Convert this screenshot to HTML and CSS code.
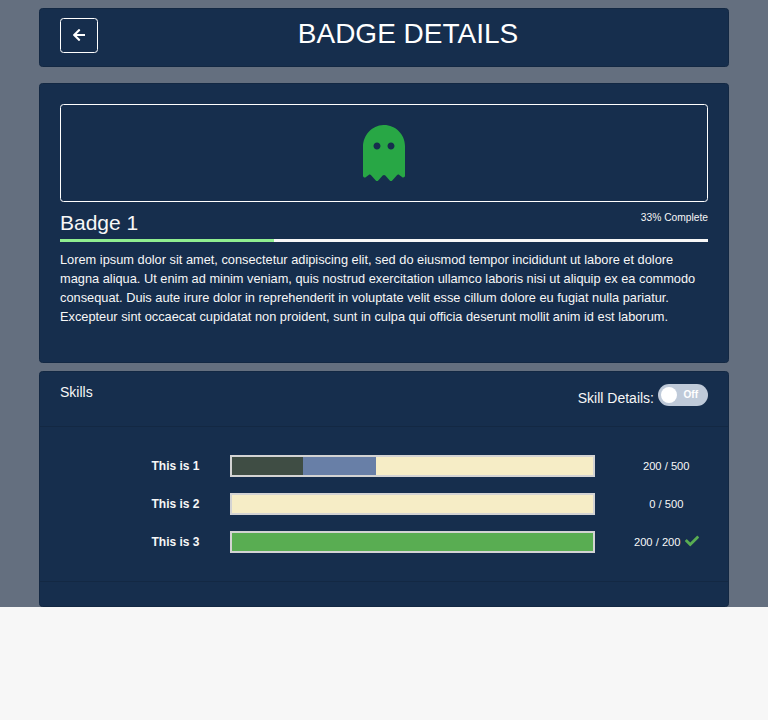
FILE: index.html
```html
<!DOCTYPE html>
<html lang="en">
<head>
<meta charset="utf-8">
<title>Badge Details</title>
<link rel="stylesheet" href="styles.css">
</head>
<body>
<main class="page">
  <header class="card title-card">
    <button class="back" type="button" aria-label="Back">
      <svg width="12.25" height="14" viewBox="0 0 448 512"><path fill="currentColor" d="M257.5 445.1l-22.2 22.2c-9.4 9.4-24.6 9.4-33.9 0L7 273c-9.4-9.4-9.4-24.6 0-33.9L201.4 44.7c9.4-9.4 24.6-9.4 33.9 0l22.2 22.2c9.5 9.5 9.3 25-.4 34.3L136.6 216H424c13.3 0 24 10.7 24 24v32c0 13.3-10.7 24-24 24H136.6l120.5 114.8c9.8 9.3 10 24.8.4 34.3z"/></svg>
    </button>
    <h1>BADGE DETAILS</h1>
  </header>

  <section class="card badge-card">
    <div class="badge-icon">
      <svg width="42" height="56" viewBox="0 0 384 512"><path fill="currentColor" d="M186.1.09C81.01 3.24 0 94.92 0 200.05v263.92c0 14.26 17.23 21.39 27.31 11.31l24.92-18.53c6.66-4.95 16-3.99 21.51 2.21l42.95 48.35c6.25 6.25 16.38 6.25 22.63 0l40.72-45.85c6.37-7.17 17.56-7.17 23.92 0l40.72 45.85c6.25 6.25 16.38 6.25 22.63 0l42.95-48.35c5.51-6.2 14.85-7.17 21.51-2.21l24.92 18.53c10.08 10.08 27.31 2.94 27.31-11.31V192C384 84 294.83-3.17 186.1.09zM128 224c-17.67 0-32-14.33-32-32s14.33-32 32-32 32 14.33 32 32-14.33 32-32 32zm128 0c-17.67 0-32-14.33-32-32s14.33-32 32-32 32 14.33 32 32-14.33 32-32 32z"/></svg>
    </div>
    <div class="badge-head">
      <h2>Badge 1</h2>
      <span class="complete">33% Complete</span>
    </div>
    <div class="progress"><div class="progress-fill"></div></div>
    <p>Lorem ipsum dolor sit amet, consectetur adipiscing elit, sed do eiusmod tempor incididunt ut labore et dolore magna aliqua. Ut enim ad minim veniam, quis nostrud exercitation ullamco laboris nisi ut aliquip ex ea commodo consequat. Duis aute irure dolor in reprehenderit in voluptate velit esse cillum dolore eu fugiat nulla pariatur. Excepteur sint occaecat cupidatat non proident, sunt in culpa qui officia deserunt mollit anim id est laborum.</p>
  </section>

  <section class="card skills-card">
    <div class="skills-head">
      <span>Skills</span>
      <div class="details">
        <span class="details-label">Skill Details:</span>
        <span class="switch"><span class="knob"></span><span class="switch-text">Off</span></span>
      </div>
    </div>
    <div class="skills-body">
      <div class="skill">
        <span class="name">This is 1</span>
        <div class="bar"><div class="before"></div><div class="today"></div></div>
        <span class="points">200 / 500</span>
      </div>
      <div class="skill">
        <span class="name">This is 2</span>
        <div class="bar"></div>
        <span class="points">0 / 500</span>
      </div>
      <div class="skill">
        <span class="name">This is 3</span>
        <div class="bar"><div class="full"></div></div>
        <span class="points">200 / 200 <svg class="check" width="14" height="14" viewBox="0 0 512 512"><path fill="currentColor" d="M173.898 439.404l-166.4-166.4c-9.997-9.997-9.997-26.206 0-36.204l36.203-36.204c9.997-9.998 26.207-9.998 36.204 0L192 312.69 432.095 72.596c9.997-9.997 26.207-9.997 36.204 0l36.203 36.204c9.997 9.997 9.997 26.206 0 36.204l-294.4 294.401c-9.998 9.997-26.207 9.997-36.204-.001z"/></svg></span>
      </div>
    </div>
    <div class="skills-foot"></div>
  </section>
</main>
</body>
</html>
```

FILE: styles.css
```css
* { box-sizing: border-box; }

body {
  margin: 0;
  background: #f7f7f7;
  color: #f7f7f7;
  font: 14px/21px "Liberation Sans", Arial, sans-serif;
}

h1, h2, p { margin: 0; font-weight: 400; }
svg { display: block; }

.page {
  height: 607px;
  padding: 8px 39px 0;
  background: #646f7f;
}

.card {
  background: #162e4d;
  border: 1px solid #132843;
  border-radius: 3.5px;
}

.title-card {
  display: flex;
  height: 59px;
  padding: 9px 20px 0;
  margin-bottom: 16px;
}

.back {
  display: flex;
  align-items: center;
  justify-content: center;
  width: 38px;
  height: 35px;
  padding: 0 0 2px;
  color: #fff;
  background: none;
  border: 1px solid #fff;
  border-radius: 3.5px;
}

.title-card h1 {
  flex: 1;
  margin-left: 10px;
  color: #fff;
  font-size: 28px;
  line-height: 31px;
  text-align: center;
}

.badge-card {
  height: 280px;
  padding: 20px;
  margin-bottom: 8px;
}

.badge-icon {
  display: flex;
  align-items: center;
  justify-content: center;
  height: 98px;
  color: #28a745;
  border: 1px solid #fff;
  border-radius: 3.5px;
}

.badge-head {
  display: flex;
  justify-content: space-between;
  height: 37px;
  padding-top: 8px;
}

.badge-head h2 { font-size: 21px; line-height: 25px; }
.complete { font-size: 10.24px; line-height: 15px; }

.progress { height: 3px; background: #f7f7f7; }
.progress-fill { width: 33%; height: 100%; background: #90ee90; }

.badge-card p {
  margin-top: 8px;
  font-size: 12.8px;
  line-height: 19px;
}

.skills-card { height: 236px; }

.skills-head {
  display: flex;
  justify-content: space-between;
  height: 55px;
  padding: 10px 20px 0;
  border-bottom: 1px solid #132843;
}

.details { display: flex; gap: 4px; }
.details-label { padding-top: 6px; }

.switch {
  display: flex;
  align-items: center;
  width: 50px;
  height: 22px;
  margin-top: 2px;
  padding: 0 10px 0 3px;
  color: #fff;
  border-radius: 11px;
  background: #bfcad9;
}

.knob { width: 16px; height: 16px; border-radius: 50%; background: #fff; }

.switch-text {
  flex: 1;
  font-size: 10px;
  font-weight: 700;
  line-height: 20px;
  text-align: right;
}

.skills-body {
  display: grid;
  align-content: start;
  gap: 16px;
  height: 154px;
  padding: 28px 20px 0;
}

.skill {
  display: grid;
  grid-template-columns: 139.5px 365px 1fr;
  column-gap: 30.5px;
  align-items: center;
  height: 22px;
}

.name { font-size: 12px; font-weight: 700; text-align: right; }

.bar {
  display: flex;
  height: 22px;
  border: 2px solid #d3d3d3;
  background: #f6edc6;
}

.before { width: 71px; background: #3f4d44; }
.today { width: 73px; background: #687fa7; }
.full { width: 100%; background: #59ad52; }

.points {
  display: flex;
  align-items: center;
  justify-content: center;
  gap: 4px;
  margin-right: 1px;
  font-size: 11.2px;
}

.check { margin-bottom: 2px; color: #59ad52; }

.skills-foot { border-top: 1px solid #132843; }
```
